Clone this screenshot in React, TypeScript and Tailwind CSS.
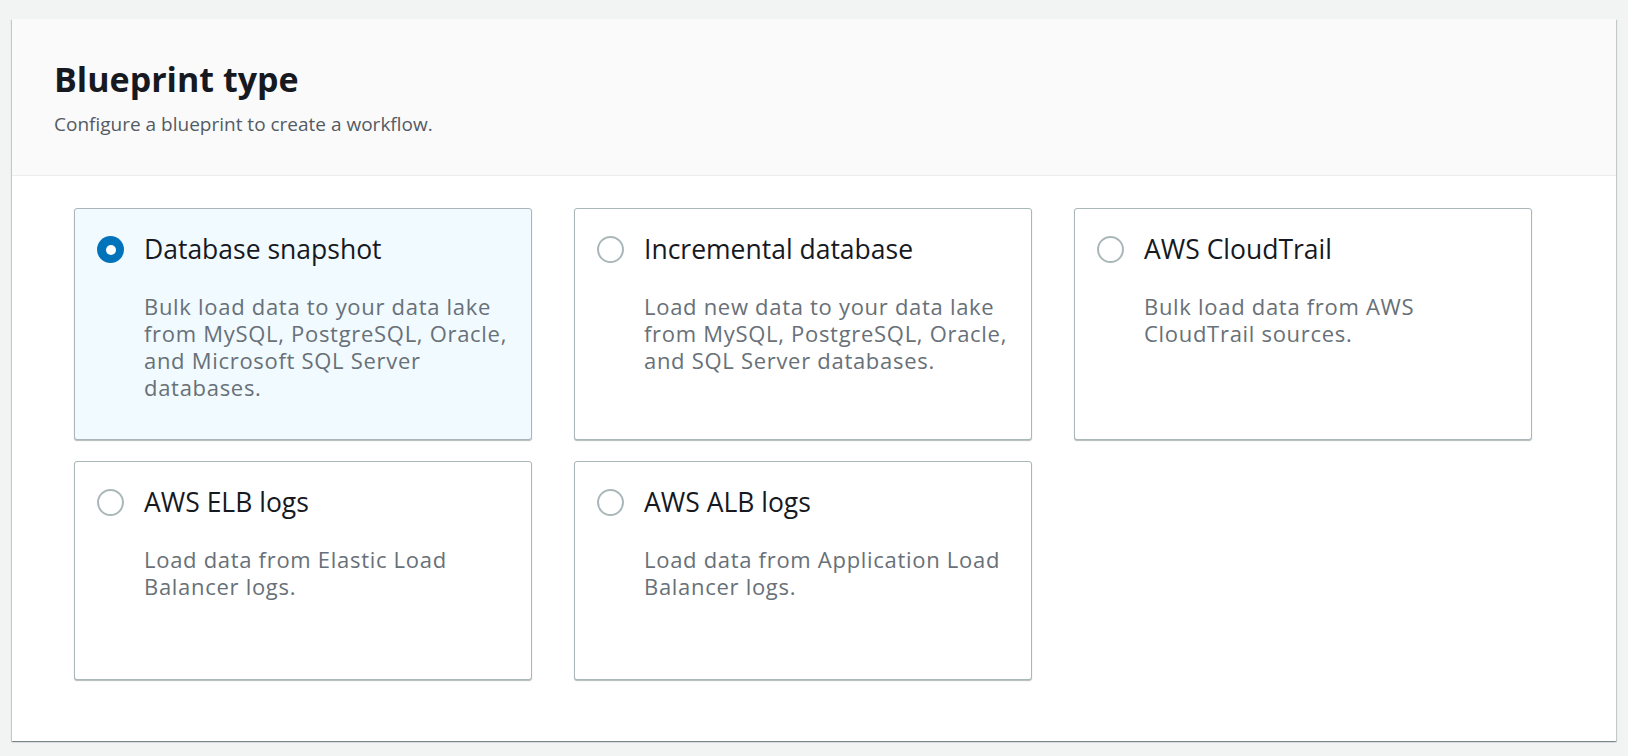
import React from 'react';

type Blueprint = {
  id: string;
  title: string;
  description: string;
};

const blueprints: Blueprint[] = [
  {
    id: 'snapshot',
    title: 'Database snapshot',
    description:
      'Bulk load data to your data lake from MySQL, PostgreSQL, Oracle, and Microsoft SQL Server databases.',
  },
  {
    id: 'incremental',
    title: 'Incremental database',
    description: 'Load new data to your data lake from MySQL, PostgreSQL, Oracle, and SQL Server databases.',
  },
  {
    id: 'cloudtrail',
    title: 'AWS CloudTrail',
    description: 'Bulk load data from AWS CloudTrail sources.',
  },
  {
    id: 'elb',
    title: 'AWS ELB logs',
    description: 'Load data from Elastic Load Balancer logs.',
  },
  {
    id: 'alb',
    title: 'AWS ALB logs',
    description: 'Load data from Application Load Balancer logs.',
  },
];

function Radio({ checked }: { checked: boolean }) {
  if (checked) {
    return (
      <span className="flex h-[27px] w-[27px] shrink-0 items-center justify-center rounded-full bg-[#0073bb]">
        <span className="h-[10px] w-[10px] rounded-full bg-white" />
      </span>
    );
  }
  return <span className="h-[27px] w-[27px] shrink-0 rounded-full border-2 border-[#aab7b8] bg-white" />;
}

function BlueprintTile({
  item,
  selected,
  onSelect,
}: {
  item: Blueprint;
  selected: boolean;
  onSelect: () => void;
}) {
  return (
    <button
      type="button"
      onClick={onSelect}
      className={`flex items-start gap-5 rounded-[3px] border border-[#aab7b8] px-[22px] pt-[27px] text-left shadow-[0_1px_1px_0_rgba(0,28,36,0.3)] ${
        selected ? 'bg-[#f1faff]' : 'bg-white'
      }`}
    >
      <Radio checked={selected} />
      <div className="-mt-[3px] w-[388px]">
        <div className="text-[26.5px] leading-[32px] text-[#16191f]">{item.title}</div>
        <p className="mt-[28px] text-[22px] leading-[27px] tracking-[0.032em] text-[#687078]">
          {item.description}
        </p>
      </div>
    </button>
  );
}

export default function App() {
  const [selected, setSelected] = React.useState('snapshot');

  return (
    <div
      className="min-h-screen bg-[#f2f3f3] px-[12px] pt-[19px]"
      style={{ fontFamily: '"Open Sans", "Noto Sans", sans-serif' }}
    >
      <section className="bg-white shadow-[0_1px_1px_0_rgba(0,28,36,0.3),1px_1px_1px_0_rgba(0,28,36,0.15),-1px_1px_1px_0_rgba(0,28,36,0.15)]">
        <header className="h-[157px] border-b border-[#eaeded] bg-[#fafafa] px-[42px] pt-[40px]">
          <h2 className="text-[34px] font-bold leading-[40px] text-[#16191f]">Blueprint type</h2>
          <p className="mt-[13px] text-[19px] leading-[24px] text-[#545b64]">
            Configure a blueprint to create a workflow.
          </p>
        </header>
        <div className="grid grid-cols-[458px_458px_458px] grid-rows-[232px_219px] gap-x-[42px] gap-y-[21px] pt-[32px] pb-[61px] pl-[62px]">
          {blueprints.map((b) => (
            <BlueprintTile key={b.id} item={b} selected={selected === b.id} onSelect={() => setSelected(b.id)} />
          ))}
        </div>
      </section>
    </div>
  );
}
